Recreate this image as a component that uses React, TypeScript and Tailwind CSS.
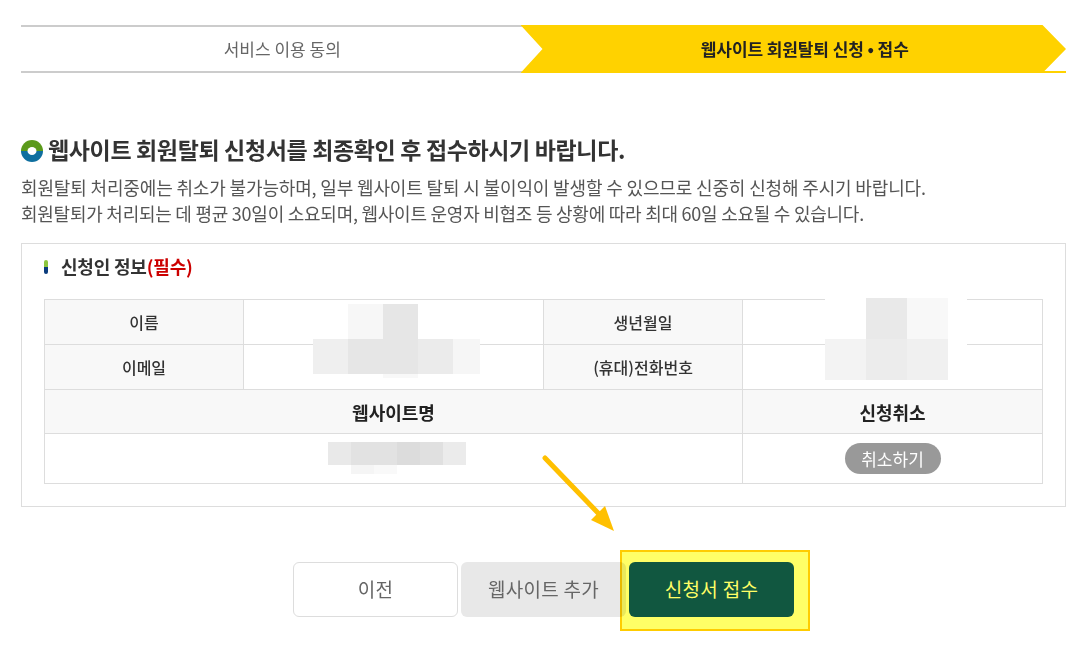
const font = { fontFamily: '"Noto Sans CJK KR", "Liberation Sans", sans-serif' };

function Blocks({ cells }: { cells: [number, number, number, number, string][] }) {
  return (
    <>
      {cells.map(([x, y, w, h, c], i) => (
        <div
          key={i}
          className="absolute"
          style={{ left: x - 44, top: y - 299, width: w, height: h, background: c }}
        />
      ))}
    </>
  );
}

const nameCells: [number, number, number, number, string][] = [
  [348, 304, 35, 35, "#f7f7f7"],
  [383, 304, 35, 35, "#e6e6e6"],
  [313, 339, 35, 35, "#efefef"],
  [348, 339, 35, 35, "#e6e6e6"],
  [383, 339, 35, 35, "#e6e6e6"],
  [418, 339, 35, 35, "#ebebeb"],
  [453, 339, 27, 35, "#f6f6f6"],
  [383, 374, 35, 4, "#f8f8f8"],
];

const birthCells: [number, number, number, number, string][] = [
  [825, 298, 41, 41, "#ffffff"],
  [866, 298, 41, 41, "#e9e9e9"],
  [907, 298, 41, 41, "#f8f8f8"],
  [948, 298, 19, 47, "#ffffff"],
  [825, 339, 41, 41, "#f3f3f3"],
  [866, 339, 41, 41, "#ececec"],
  [907, 339, 41, 41, "#f0f0f0"],
];

const siteCells: [number, number, number, number, string][] = [
  [328, 442, 23, 23, "#e9e9e9"],
  [351, 442, 23, 23, "#e2e2e2"],
  [374, 442, 23, 23, "#e2e2e2"],
  [397, 442, 23, 23, "#dcdcdc"],
  [420, 442, 23, 23, "#e0e0e0"],
  [443, 442, 23, 23, "#ebebeb"],
  [351, 465, 23, 9, "#f5f5f5"],
  [374, 465, 23, 9, "#f9f9f9"],
];

function Stepper() {
  return (
    <div className="flex h-12">
      <div className="flex flex-1 items-center justify-center border-y-2 border-[#ccc] text-[17px] text-[#666]">
        서비스 이용 동의
      </div>
      <div className="relative flex flex-1 items-center justify-center text-[17px] font-bold tracking-[-0.1px] text-[#222]">
        <div className="absolute inset-y-0 -left-[23px] right-0 bg-[#ffd200] [clip-path:polygon(0_0,522px_0,100%_50%,522px_100%,0_100%,22px_50%)]" />
        <div className="absolute bottom-0 right-0 h-0.5 w-6 bg-[#ffd200]" />
        <span className="relative">웹사이트 회원탈퇴 신청 • 접수</span>
      </div>
    </div>
  );
}

function InfoTable() {
  const th = "border border-[#ddd] bg-[#f8f8f8] text-base font-medium text-[#333]";
  const thBig = "border border-[#ddd] bg-[#f8f8f8] text-lg font-bold text-[#222]";
  return (
    <div className="relative mt-[21px] w-[998px]">
      <table className="w-full table-fixed border-collapse">
        <colgroup>
          <col className="w-[199px]" />
          <col className="w-[300px]" />
          <col className="w-[199px]" />
          <col className="w-[300px]" />
        </colgroup>
        <tbody>
          <tr className="h-[45px]">
            <th className={th}>이름</th>
            <td className="border border-[#ddd]" />
            <th className={th}>생년월일</th>
            <td className="border border-[#ddd]" />
          </tr>
          <tr className="h-[45px]">
            <th className={th}>이메일</th>
            <td className="border border-[#ddd]" />
            <th className={th}>(휴대)전화번호</th>
            <td className="border border-[#ddd]" />
          </tr>
          <tr className="h-11">
            <th className={thBig} colSpan={3}>웹사이트명</th>
            <th className={thBig}>신청취소</th>
          </tr>
          <tr className="h-[50px]">
            <td className="border border-[#ddd]" colSpan={3} />
            <td className="border border-[#ddd] text-center">
              <button className="h-[31px] w-24 rounded-full bg-[#999] text-[17px] leading-none text-white">
                취소하기
              </button>
            </td>
          </tr>
        </tbody>
      </table>
      <Blocks cells={nameCells} />
      <Blocks cells={birthCells} />
      <Blocks cells={siteCells} />
    </div>
  );
}

function Buttons() {
  return (
    <div className="relative mt-[55px] flex justify-center gap-[3px] text-[19px] tracking-[0.3px]">
      <button className="h-[55px] w-[165px] rounded-md border border-[#ddd] bg-white text-[#666]">이전</button>
      <button className="h-[55px] w-[165px] rounded-md bg-[#e8e8e8] text-[#666]">웹사이트 추가</button>
      <button className="relative z-10 h-[55px] w-[165px] rounded-md bg-[#115740] text-[#ffff66]">신청서 접수</button>
      {/* 강조 표시 */}
      <div className="absolute left-[599px] top-[-12px] h-[81px] w-[190px] border-2 border-[#ffcc00] bg-[#ffff66] mix-blend-multiply" />
      <svg className="absolute left-[500px] top-[-107px] z-20" width="100" height="80" viewBox="0 0 100 80">
        <path d="M24 3 L78 59" stroke="#ffc000" strokeWidth="5" strokeLinecap="round" fill="none" />
        <path d="M93 76 L84 51 L70 65 Z" fill="#ffc000" />
      </svg>
    </div>
  );
}

export default function App() {
  return (
    <div className="h-[646px] w-[1089px] overflow-hidden bg-white pl-[21px] pr-[23px] pt-[25px]" style={font}>
      <Stepper />

      <h2 className="mt-[60px] flex h-8 items-center text-[23px] font-bold tracking-[-0.36px] text-[#333]">
        <svg className="mr-[5px] mt-1 shrink-0" width="22" height="22" viewBox="0 0 22 22">
          <path d="M0 11a11 11 0 0 1 22 0z" fill="#5b9a1b" />
          <path d="M0 11a11 11 0 0 0 22 0z" fill="#0f6f9f" />
          <ellipse cx="11" cy="11" rx="4.5" ry="4" fill="#fff" />
        </svg>
        웹사이트 회원탈퇴 신청서를 최종확인 후 접수하시기 바랍니다.
      </h2>

      <p className="mt-[9px] text-lg leading-[26px] tracking-[-0.15px] text-[#555]">
        회원탈퇴 처리중에는 취소가 불가능하며, 일부 웹사이트 탈퇴 시 불이익이 발생할 수 있으므로 신중히 신청해 주시기 바랍니다.
        <br />
        <span className="tracking-[-0.25px]">
          회원탈퇴가 처리되는 데 평균 30일이 소요되며, 웹사이트 운영자 비협조 등 상황에 따라 최대 60일 소요될 수 있습니다.
        </span>
      </p>

      <div className="mt-[17px] h-[264px] border border-[#ddd] px-[22px] pt-[10px]">
        <h3 className="flex h-6 items-center text-lg font-bold tracking-[-0.2px] text-[#333]">
          <span className="mr-[13px] mt-0.5 h-[14px] w-1 rounded-full bg-[linear-gradient(#8dc63f_50%,#0b3c7d_50%)]" />
          신청인 정보<span className="text-[#cc0000]">(필수)</span>
        </h3>
        <InfoTable />
      </div>

      <Buttons />
    </div>
  );
}
